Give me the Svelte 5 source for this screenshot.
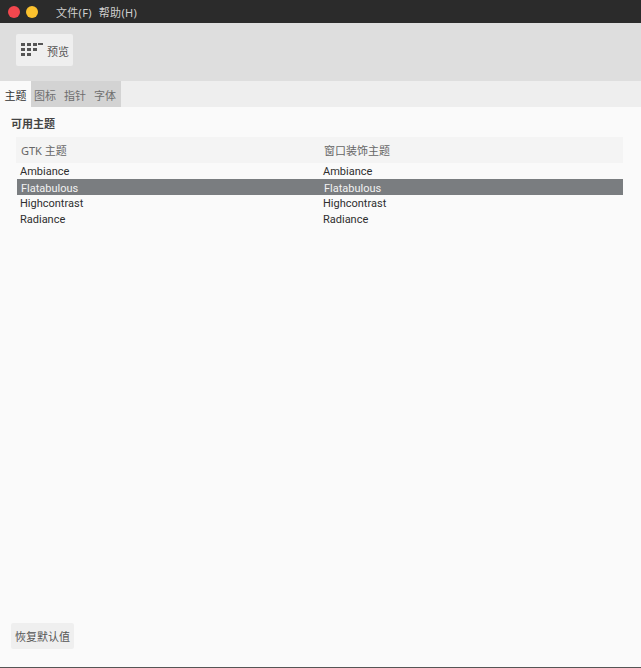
<script>
  const themes = ['Ambiance', 'Flatabulous', 'Highcontrast', 'Radiance'];
  const selected = 'Flatabulous';
</script>

<div class="win">
  <header class="titlebar">
    <div class="lights"><span class="light red"></span><span class="light yellow"></span></div>
    <nav class="menu"><span>文件(F)</span><span>帮助(H)</span></nav>
  </header>
  <div class="toolbar">
    <button class="tool">
      <svg width="24" height="16" viewBox="0 0 24 16" aria-hidden="true">
        <g fill="#555">
          <rect x="0" y="1" width="4" height="3"/><rect x="6" y="1" width="4" height="3"/><rect x="12" y="1" width="4" height="3"/><rect x="17" y="1" width="5" height="2"/>
          <rect x="0" y="6" width="4" height="3"/><rect x="6" y="6" width="4" height="3"/><rect x="12" y="6" width="4" height="3"/>
          <rect x="0" y="11" width="4" height="3"/><rect x="6" y="11" width="4" height="3"/>
        </g>
      </svg>
      <span class="tool-label">预览</span>
    </button>
  </div>
  <div class="tabs">
    <span class="tab active">主题</span>
    <div class="inactive"><span class="tab">图标</span><span class="tab">指针</span><span class="tab">字体</span></div>
  </div>
  <main class="content">
    <h2>可用主题</h2>
    <div class="table">
      <div class="row head"><span>GTK 主题</span><span>窗口装饰主题</span></div>
      {#each themes as t}
        <div class="row item" class:sel={t === selected}><span>{t}</span><span>{t}</span></div>
      {/each}
    </div>
    <div class="spacer"></div>
    <button class="reset">恢复默认值</button>
  </main>
</div>

<style>
  :global(body) { margin: 0; background: #fafafa; }
  .win {
    width: 641px; height: 668px; display: flex; flex-direction: column; overflow: hidden;
    box-sizing: border-box; border-bottom: 1px solid #555;
    font-family: "Noto Sans", "Noto Sans CJK SC", sans-serif; font-size: 11px; color: #333;
  }
  .titlebar { height: 23px; flex: none; background: #2b2b2b; display: flex; align-items: center; padding-left: 8px; box-sizing: border-box; }
  .lights { display: flex; gap: 6px; width: 48px; }
  .light { width: 12px; height: 12px; border-radius: 50%; }
  .red { background: #f4474e; }
  .yellow { background: #fcc22e; }
  .menu { display: flex; gap: 7px; color: #d0d0d0; letter-spacing: 0.3px; }
  .toolbar { height: 58px; flex: none; background: #dedede; padding: 11px 0 0 16px; box-sizing: border-box; }
  .tool { width: 57px; height: 32px; border: 0; padding: 0 0 0 5px; border-radius: 2px; background: #efefef; display: flex; align-items: center; gap: 2px; font: inherit; color: #555; }
  .tool svg { flex: none; }
  .tool-label { padding-top: 2px; }
  .tabs { height: 26px; flex: none; display: flex; background: #eeeeee; }
  .tab { width: 30px; display: flex; align-items: center; justify-content: center; color: #6e6e6e; padding: 2px 2px 0 0; box-sizing: border-box; }
  .tab.active { width: 31px; padding-right: 0; background: #fafafa; color: #333; }
  .inactive { display: flex; background: #d3d3d3; }
  .content { flex: 1; background: #fafafa; display: flex; flex-direction: column; padding: 0 18px 18px 11px; }
  h2 { margin: 9px 0 5px; height: 16px; line-height: 16px; font-size: 11px; font-weight: 700; color: #444; }
  .table { margin-left: 5px; }
  .row { display: grid; grid-template-columns: 303px 1fr; height: 16px; line-height: 16px; padding-left: 4px; }
  .row.head { height: 26px; line-height: 28px; background: #f4f4f4; color: #666; padding-left: 5px; }
  .row.item { color: #2e2e2e; font-family: Roboto, "Noto Sans", sans-serif; font-size: 11px; line-height: 18px; }
  .row.sel { background: #7a7d80; color: #f2f2f2; margin-left: 1px; padding-left: 4px; line-height: 20px; }
  .spacer { flex: 1; }
  .reset { align-self: flex-start; width: 63px; height: 26px; border: 0; padding: 0; border-radius: 2px; background: #efefef; font: inherit; color: #555; }
</style>
